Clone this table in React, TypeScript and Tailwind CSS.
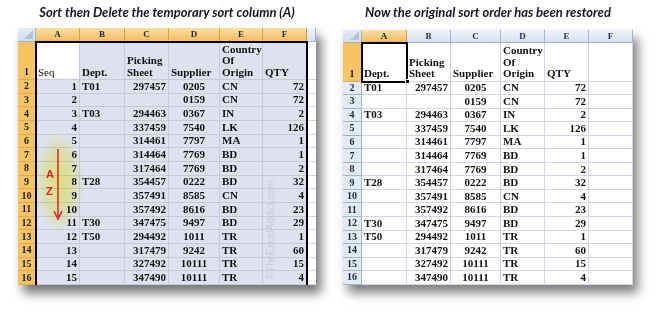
import React from "react";

type Row = string[];

const leftRows: Row[] = [
  ["1", "T01", "297457", "0205", "CN", "72"],
  ["2", "", "", "0159", "CN", "72"],
  ["3", "T03", "294463", "0367", "IN", "2"],
  ["4", "", "337459", "7540", "LK", "126"],
  ["5", "", "314461", "7797", "MA", "1"],
  ["6", "", "314464", "7769", "BD", "1"],
  ["7", "", "317464", "7769", "BD", "2"],
  ["8", "T28", "354457", "0222", "BD", "32"],
  ["9", "", "357491", "8585", "CN", "4"],
  ["10", "", "357492", "8616", "BD", "23"],
  ["11", "T30", "347475", "9497", "BD", "29"],
  ["12", "T50", "294492", "1011", "TR", "1"],
  ["13", "", "317479", "9242", "TR", "60"],
  ["14", "", "327492", "10111", "TR", "15"],
  ["15", "", "347490", "10111", "TR", "4"],
];

const rightRows: Row[] = leftRows.map((r) => r.slice(1).concat([""]));

const serif = "font-['Liberation_Serif',serif]";

function alignClass(a: string) {
  if (a === "r") return "justify-end pr-[2px]";
  if (a === "c") return "justify-center";
  return "justify-start pl-[2px]";
}

function Corner() {
  return (
    <div className="relative bg-gradient-to-b from-[#e3ebf6] to-[#d2deee] border-r border-b border-[#9eb6ce]">
      <svg className="absolute right-[2px] bottom-[2px]" width="9" height="9" viewBox="0 0 9 9">
        <polygon points="9,0 9,9 0,9" fill="#b3c4da" />
      </svg>
    </div>
  );
}

function ColHead({ label, sel }: { label: string; sel: boolean }) {
  return (
    <div
      className={
        sel
          ? "flex items-center justify-center bg-gradient-to-b from-[#fbdfa4] to-[#f2bd5a] border-r border-b border-[#d89e46] text-[9px] font-bold leading-none text-[#2a2a2a]"
          : "flex items-center justify-center bg-gradient-to-b from-[#eef3fa] to-[#d8e2ef] border-r border-b border-[#9eb6ce] text-[9px] font-bold leading-none text-[#27344d]"
      }
    >
      {label}
    </div>
  );
}

function RowHead({ label, sel, bottom }: { label: string; sel: boolean; bottom?: boolean }) {
  const pos = bottom ? " items-end pb-[2px]" : " items-center";
  return (
    <div
      className={
        (sel
          ? "flex justify-center bg-[#f6c463] border-r border-b border-[#e3ab52] text-[10px] font-bold leading-none text-[#1a1a1a]"
          : "flex justify-center bg-[#e2eaf6] border-r border-b border-[#9eb6ce] text-[10px] font-bold leading-none text-[#1f2a40]") + pos
      }
    >
      {label}
    </div>
  );
}

function LeftSheet() {
  const aligns = ["r", "l", "r", "c", "l", "r"];
  const cols = ["A", "B", "C", "D", "E", "F"];
  const cells: React.ReactNode[] = [];
  cells.push(<Corner key="corner" />);
  cols.forEach((c) => cells.push(<ColHead key={"h" + c} label={c} sel={true} />));
  cells.push(<ColHead key="hG" label="" sel={false} />);
  cells.push(<RowHead key="r1" label="1" sel={true} bottom />);
  const headers = ["Seq", "Dept.", "Picking Sheet", "Supplier", "Country Of Origin", "QTY"];
  headers.forEach((h, i) =>
    cells.push(
      <div
        key={"hd" + i}
        className={
          (i === 0 ? "bg-white" : "bg-[#dde2ee]") +
          " border-r border-b border-[#c4cbdc] flex items-end pl-[2px] pr-[2px] pb-[1px] text-[11px] font-bold leading-[11.5px] text-[#111]"
        }
      >
        <span className={i === 0 ? "font-normal" : ""}>{h}</span>
      </div>
    )
  );
  cells.push(<div key="g1" className="bg-white border-b border-[#d0d7e5]" />);
  leftRows.forEach((r, ri) => {
    cells.push(<RowHead key={"rh" + ri} label={String(ri + 2)} sel={true} />);
    r.forEach((v, ci) =>
      cells.push(
        <div
          key={ri + "-" + ci}
          className={
            "bg-[#dde2ee] border-r border-b border-[#c4cbdc] flex items-center text-[11px] font-bold leading-none text-[#111] " +
            alignClass(aligns[ci])
          }
        >
          {v}
        </div>
      )
    );
    cells.push(<div key={"g" + ri} className="bg-white border-b border-[#d0d7e5]" />);
  });
  return (
    <div className="relative shadow-[5px_8px_10px_rgba(0,0,0,0.55)]">
      <div className={"grid grid-cols-[18px_44px_45px_44px_51px_43px_44px_9px] grid-rows-[14px_38px_repeat(15,13.67px)] " + serif}>
        {cells}
      </div>
      <div className="absolute left-[17px] top-[13px] w-[273px] bottom-0 border-2 border-b-0 border-black pointer-events-none" />
      <div className="absolute left-[16px] top-[104px] w-[50px] h-[100px] rounded-full bg-[radial-gradient(ellipse_at_center,rgba(253,250,130,0.95)_0%,rgba(253,250,150,0.7)_40%,rgba(253,250,170,0)_72%)] mix-blend-multiply pointer-events-none" />
      <svg className="absolute left-[26px] top-[120px] pointer-events-none" width="24" height="74" viewBox="0 0 24 74">
        <line x1="14" y1="1" x2="14" y2="69" stroke="#e3221c" strokeWidth="1.5" />
        <polyline points="10,63 14,71 18,63" fill="none" stroke="#e3221c" strokeWidth="1.5" />
      </svg>
      <div className="absolute left-[28px] top-[141px] text-[11px] font-bold leading-none text-[#e3221c] font-['Liberation_Sans',sans-serif] pointer-events-none">
        A
      </div>
      <div className="absolute left-[28px] top-[158px] text-[11px] font-bold leading-none text-[#e3221c] font-['Liberation_Sans',sans-serif] pointer-events-none">
        Z
      </div>
      <div className="absolute left-[203px] top-[197px] w-[100px] text-center -rotate-90 text-[10px] leading-none text-[#c8ccd7] font-['Liberation_Sans',sans-serif] pointer-events-none">
        ©TheExcelAddict.com
      </div>
    </div>
  );
}

function RightSheet() {
  const aligns = ["l", "r", "c", "l", "r", "l"];
  const cols = ["A", "B", "C", "D", "E", "F"];
  const cells: React.ReactNode[] = [];
  cells.push(<Corner key="corner" />);
  cols.forEach((c, i) => cells.push(<ColHead key={"h" + c} label={c} sel={i === 0} />));
  cells.push(<RowHead key="r1" label="1" sel={true} bottom />);
  const headers = ["Dept.", "Picking Sheet", "Supplier", "Country Of Origin", "QTY", ""];
  headers.forEach((h, i) =>
    cells.push(
      <div
        key={"hd" + i}
        className="bg-white border-r border-b border-[#d0d7e5] flex items-end px-[2px] pb-[1px] text-[11px] font-bold leading-[11.5px] text-[#111]"
      >
        <span>{h}</span>
      </div>
    )
  );
  rightRows.forEach((r, ri) => {
    cells.push(<RowHead key={"rh" + ri} label={String(ri + 2)} sel={false} />);
    r.forEach((v, ci) =>
      cells.push(
        <div
          key={ri + "-" + ci}
          className={
            "bg-white border-r border-b border-[#d0d7e5] flex items-center text-[11px] font-bold leading-none text-[#111] " +
            alignClass(aligns[ci])
          }
        >
          {v}
        </div>
      )
    );
  });
  return (
    <div className="relative shadow-[5px_8px_10px_rgba(0,0,0,0.5)]">
      <div className={"grid grid-cols-[19px_45px_44px_50px_44px_44px_44px] grid-rows-[13px_38.5px_repeat(15,13.55px)] " + serif}>
        {cells}
      </div>
      <div className="absolute left-[18px] top-[12px] w-[47px] h-[40.5px] border-2 border-black pointer-events-none" />
      <div className="absolute left-[62px] top-[49px] w-[5px] h-[5px] bg-black border border-white pointer-events-none" />
    </div>
  );
}

export default function App() {
  return (
    <div className="w-[669px] h-[323px] bg-white overflow-hidden flex">
      <div className="ml-[18px] w-[298px] flex flex-col">
        <div className="h-[28px] flex items-start justify-center pt-[4px] text-[13px] font-bold italic leading-[16px] text-[#151520] font-['Lato',sans-serif] whitespace-nowrap">
          Sort then Delete the temporary sort column (A)
        </div>
        <LeftSheet />
      </div>
      <div className="ml-[27px] w-[290px] flex flex-col">
        <div className="h-[30px] flex items-start justify-center pt-[4px] text-[13px] font-bold italic leading-[16px] text-[#151520] font-['Lato',sans-serif] whitespace-nowrap">
          Now the original sort order has been restored
        </div>
        <RightSheet />
      </div>
    </div>
  );
}
